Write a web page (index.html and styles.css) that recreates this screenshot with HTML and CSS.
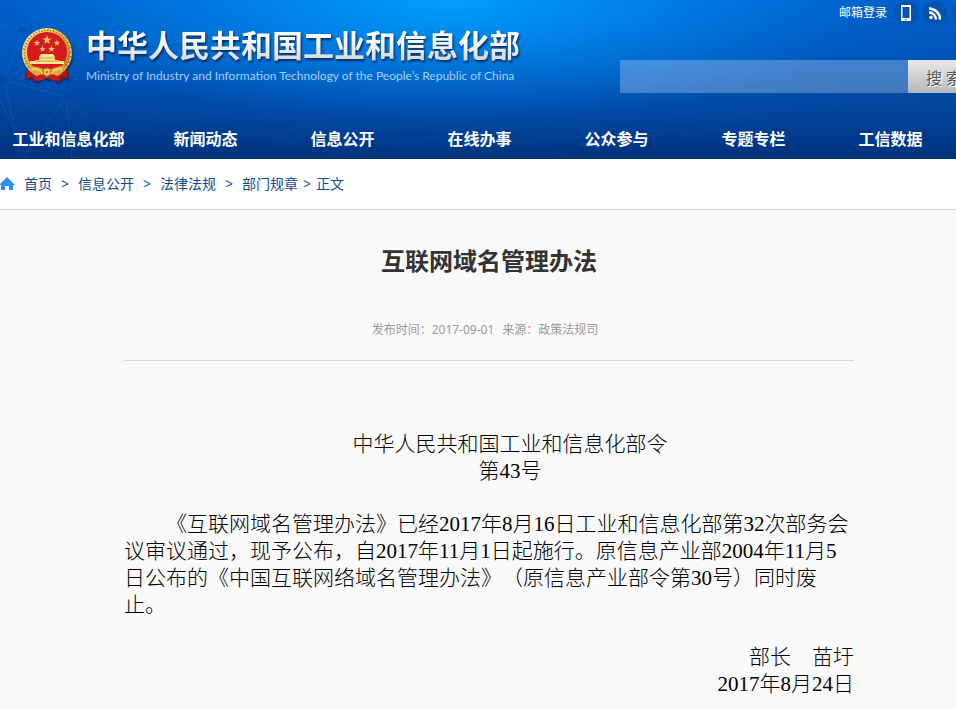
FILE: index.html
```html
<!DOCTYPE html>
<html lang="zh-CN">
<head>
<meta charset="utf-8">
<title>互联网域名管理办法</title>
<link rel="stylesheet" href="styles.css">
</head>
<body>
<header class="header">
  <svg class="network" viewBox="0 0 110 159" aria-hidden="true">
    <g fill="none" stroke="#58b5ff" stroke-opacity=".13">
      <path d="M0 10 22 30 4 80M22 30 0 24M22 30 50 0M4 80 66 97M4 80 20 152M66 97 26 155M66 97 110 140M4 80 50 52M66 97 72 159M0 100 26 155"/>
    </g>
    <g fill="#003c91" fill-opacity=".5"><circle cx="22" cy="30" r="3"/><circle cx="4" cy="80" r="4"/><circle cx="66" cy="97" r="3"/><circle cx="26" cy="155" r="4"/></g>
  </svg>
  <div class="masthead">
    <a class="brand" href="#">
      <svg class="emblem" viewBox="0 0 54 58" aria-hidden="true">
        <defs>
          <linearGradient id="gold" x1="0" y1="0" x2="1" y2="1"><stop offset="0" stop-color="#fff0a0"/><stop offset=".45" stop-color="#e0ac38"/><stop offset="1" stop-color="#b87a18"/></linearGradient>
          <path id="star" d="M0-5 1.2-1.6 4.8-1.5 1.9.6 2.9 4 0 2-2.9 4-1.9.6-4.8-1.5-1.2-1.6Z"/>
        </defs>
        <path d="M8 39 6 52l6-2 3 5 7-5h10l7 5 3-5 6 2-2-13Z" fill="#bd1517" stroke="#7f1515"/>
        <ellipse cx="27" cy="26" rx="25" ry="25" fill="url(#gold)"/>
        <ellipse cx="27" cy="26" rx="23" ry="23" fill="none" stroke="#91651b" stroke-width="2" stroke-dasharray="1 2"/>
        <ellipse cx="27" cy="26" rx="24" ry="24" fill="none" stroke="#fff2a0" stroke-dasharray="3 2"/>
        <ellipse cx="27" cy="25" rx="20" ry="20" fill="#d71920"/>
        <g fill="#f5cb67" stroke="#b75a20" stroke-width=".3">
          <use href="#star" x="27" y="13"/>
          <use href="#star" transform="translate(17 16) scale(.7)"/><use href="#star" transform="translate(37 16) scale(.7)"/>
          <use href="#star" transform="translate(22.500 22) scale(.7)"/><use href="#star" transform="translate(31.500 22) scale(.7)"/>
        </g>
        <path d="M19 30 21 27h12l2 3v3h4v1h5v3H10v-3h5v-1h4Z" fill="#ffe693"/>
        <path d="M19 31h16M15 34h24" stroke="#d79628"/>
        <path d="M9 39q9 0 18 5 9-5 18-5-2 10-12 11H21q-10-1-12-11Z" fill="#dca93b"/>
        <path d="M12 42q7-1 11 5h8q4-6 11-5" fill="none" stroke="#fff0a0"/>
        <circle cx="27" cy="45" r="4" fill="#f3cd58" stroke="#a2681c"/><circle cx="27" cy="45" r="1.500" fill="#b98319"/>
        <path d="m14 50 8-3 5 3 5-3 8 3-5 4-8-3-8 3Z" fill="#c51c1c"/>
      </svg>
      <span class="brand-text">
        <span class="brand-cn">中华人民共和国工业和信息化部</span>
        <span class="brand-en">Ministry of Industry and Information Technology of the People’s Republic of China</span>
      </span>
    </a>
    <div class="tools">
      <div class="quick">
        <a class="mail" href="#">邮箱登录</a>
        <a class="round" href="#" aria-label="手机版"><svg viewBox="0 0 24 24"><rect x="7" y="4" width="10" height="16" rx="1" fill="#fff"/><path d="M8.500 6h7v11h-7Z" fill="#0754ad"/><circle cx="12" cy="18.500" r=".8" fill="#0754ad"/></svg></a>
        <a class="round" href="#" aria-label="RSS"><svg viewBox="0 0 24 24"><circle cx="8" cy="16.500" r="1.800" fill="#fff"/><path d="M6 11.500a7 7 0 0 1 7 7M6 7.500a11 11 0 0 1 11 11" fill="none" stroke="#fff" stroke-width="2.500"/></svg></a>
        <a class="round" href="#" aria-label="更多"></a>
      </div>
      <form class="search">
        <input class="search-box" type="text" aria-label="搜索内容">
        <button class="search-button" type="button">搜 索</button>
      </form>
    </div>
  </div>
  <nav class="nav">
    <a href="#">工业和信息化部</a>
    <a href="#">新闻动态</a>
    <a href="#">信息公开</a>
    <a href="#">在线办事</a>
    <a href="#">公众参与</a>
    <a href="#">专题专栏</a>
    <a href="#">工信数据</a>
  </nav>
</header>
<nav class="crumbs" aria-label="当前位置">
  <svg class="home" viewBox="0 0 15 14" aria-hidden="true"><path d="M7 0 15 8h-2v5H9V9H5v4H1V8h-2Z" fill="#338cf5"/></svg>
  <a href="#">首页</a><span>&gt;</span>
  <a href="#">信息公开</a><span>&gt;</span>
  <a href="#">法律法规</a><span>&gt;</span>
  <a href="#">部门规章</a><span class="tight">&gt;</span>
  <a href="#">正文</a>
</nav>
<main class="article">
  <h1>互联网域名管理办法</h1>
  <div class="meta"><span>发布时间：2017-09-01</span><span>来源：政策法规司</span></div>
  <div class="content">
    <p class="order">中华人民共和国工业和信息化部令</p>
    <p class="order">第43号</p>
    <p class="text">《互联网域名管理办法》已经2017年8月16日工业和信息化部第32次部务会议审议通过，现予公布，自2017年11月1日起施行。原信息产业部2004年11月5日公布的《中国互联网络域名管理办法》（原信息产业部令第30号）同时废止。</p>
    <p class="sign">部长　苗圩</p>
    <p class="sign">2017年8月24日</p>
  </div>
</main>
</body>
</html>
```
FILE: styles.css
```css
* {
  box-sizing: border-box;
}

html {
  overflow-x: hidden;
}

body {
  margin: 0;
  background: #f9f9f9;
  color: #000;
  font-family: "Noto Sans", "Noto Sans CJK SC", sans-serif;
  text-spacing-trim: space-all;
}

a {
  color: inherit;
  text-decoration: none;
}

.header {
  position: relative;
  overflow: hidden;
  color: #fff;
  background:
    radial-gradient(ellipse 62% 100% at 47% 0, rgba(0, 162, 255, 0.95), rgba(0, 140, 245, 0.6) 40%, rgba(0, 100, 215, 0.2) 75%, rgba(0, 90, 200, 0) 100%),
    linear-gradient(#005fc8, #0053b2 40%, #00449a 70%, #00327c);
}

.network {
  position: absolute;
  left: 0;
  top: 0;
  width: 110px;
  height: 159px;
}

.masthead {
  position: relative;
  display: flex;
  justify-content: space-between;
  height: 120px;
  margin-right: -24px;
}

.brand {
  display: flex;
  align-items: flex-start;
  gap: 12px;
  padding: 27px 0 0 20px;
}

.emblem {
  width: 54px;
  height: 58px;
  filter: drop-shadow(1px 2px 1px rgba(0, 20, 70, 0.5));
}

.brand-text {
  display: flex;
  flex-direction: column;
  white-space: nowrap;
}

.brand-cn {
  font-size: 31px;
  line-height: 37px;
  font-weight: 700;
  background: linear-gradient(#fff 30%, #d8d8d8 90%);
  background-clip: text;
  color: transparent;
  filter: drop-shadow(1px 2px 1px rgba(0, 25, 70, 0.8));
}

.brand-en {
  font-family: Lato, sans-serif;
  font-size: 12px;
  line-height: 24px;
  color: #a5d0fa;
}

.tools {
  display: flex;
  flex-direction: column;
  gap: 35px;
  width: 360px;
}

.quick {
  display: flex;
  justify-content: flex-end;
  align-items: center;
  gap: 5px;
  height: 25px;
  margin-right: 4px;
}

.mail {
  margin-right: 2px;
  font-size: 12px;
  line-height: 24px;
}

.round {
  width: 24px;
  height: 24px;
  border-radius: 50%;
  background: #0754ad;
}

.round svg {
  display: block;
}

.search {
  display: flex;
  height: 33px;
}

.search-box {
  flex: 1;
  min-width: 0;
  padding: 0 8px;
  border: 0;
  background: rgba(255, 255, 255, 0.26);
}

.search-button {
  width: 72px;
  padding: 0;
  border: 0;
  background: linear-gradient(#e8e8e8, #b9b9b9);
  color: #555;
  font: 16px "Noto Sans", "Noto Sans CJK SC", sans-serif;
  text-shadow: 1px 1px 0 #fff;
}

.nav {
  position: relative;
  display: grid;
  grid-template-columns: repeat(7, minmax(137px, 1fr));
  height: 39px;
}

.nav a {
  font-size: 16px;
  line-height: 38px;
  font-weight: 700;
  text-align: center;
  white-space: nowrap;
}

.crumbs {
  display: flex;
  align-items: center;
  height: 51px;
  border-bottom: 1px solid #ccc;
  background: #fff;
  color: #0f4c95;
  font-size: 14px;
  line-height: 20px;
}

.crumbs span {
  width: 26px;
  text-align: center;
}

.crumbs .tight {
  width: 18px;
}

.home {
  width: 15px;
  height: 14px;
  margin-right: 9px;
}

.article {
  padding: 33px 102px 14px 124px;
}

.article h1 {
  margin: 0;
  color: #333;
  font-size: 24px;
  line-height: 36px;
  text-align: center;
}

.meta {
  display: flex;
  justify-content: center;
  gap: 8px;
  padding: 41px 8px 20px 0;
  border-bottom: 1px solid #d8d8d8;
  color: #999;
  font-size: 12px;
  line-height: 20px;
}

.content {
  padding-top: 70px;
  font-family: "Liberation Serif", "Noto Sans CJK SC", serif;
  font-size: 21px;
  font-weight: 300;
  line-height: 27px;
}

.content p {
  margin: 0;
}

.order {
  text-align: center;
  text-indent: 42px;
}

.content .text {
  margin: 26px 0 25px;
  text-indent: 42px;
}

.sign {
  text-align: right;
}
```
